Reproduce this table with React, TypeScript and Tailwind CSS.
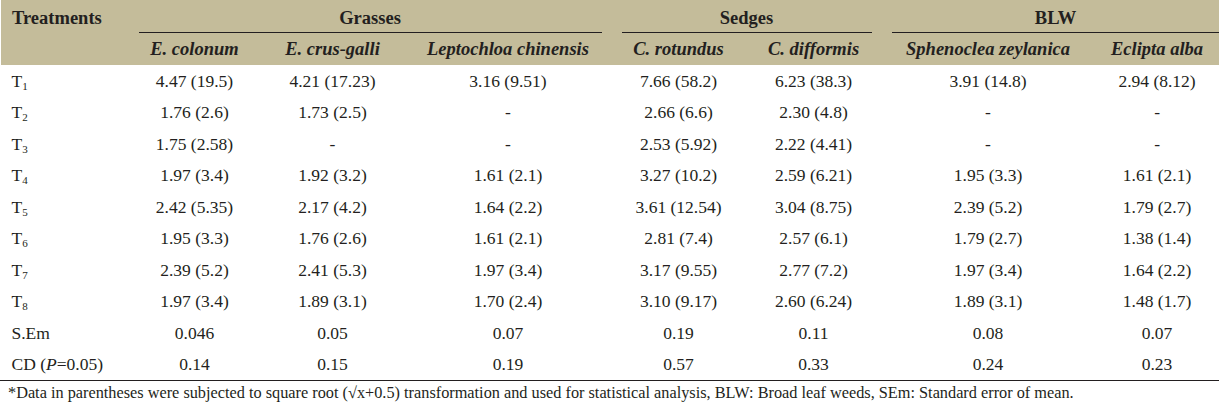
const rows: { t: React.ReactNode; v: string[] }[] = [
  { t: <T n="1" />, v: ['4.47 (19.5)', '4.21 (17.23)', '3.16 (9.51)', '7.66 (58.2)', '6.23 (38.3)', '3.91 (14.8)', '2.94 (8.12)'] },
  { t: <T n="2" />, v: ['1.76 (2.6)', '1.73 (2.5)', '-', '2.66 (6.6)', '2.30 (4.8)', '-', '-'] },
  { t: <T n="3" />, v: ['1.75 (2.58)', '-', '-', '2.53 (5.92)', '2.22 (4.41)', '-', '-'] },
  { t: <T n="4" />, v: ['1.97 (3.4)', '1.92 (3.2)', '1.61 (2.1)', '3.27 (10.2)', '2.59 (6.21)', '1.95 (3.3)', '1.61 (2.1)'] },
  { t: <T n="5" />, v: ['2.42 (5.35)', '2.17 (4.2)', '1.64 (2.2)', '3.61 (12.54)', '3.04 (8.75)', '2.39 (5.2)', '1.79 (2.7)'] },
  { t: <T n="6" />, v: ['1.95 (3.3)', '1.76 (2.6)', '1.61 (2.1)', '2.81 (7.4)', '2.57 (6.1)', '1.79 (2.7)', '1.38 (1.4)'] },
  { t: <T n="7" />, v: ['2.39 (5.2)', '2.41 (5.3)', '1.97 (3.4)', '3.17 (9.55)', '2.77 (7.2)', '1.97 (3.4)', '1.64 (2.2)'] },
  { t: <T n="8" />, v: ['1.97 (3.4)', '1.89 (3.1)', '1.70 (2.4)', '3.10 (9.17)', '2.60 (6.24)', '1.89 (3.1)', '1.48 (1.7)'] },
  { t: 'S.Em', v: ['0.046', '0.05', '0.07', '0.19', '0.11', '0.08', '0.07'] },
  { t: <>CD (<i>P</i>=0.05)</>, v: ['0.14', '0.15', '0.19', '0.57', '0.33', '0.24', '0.23'] },
]

const species = ['E. colonum', 'E. crus-galli', 'Leptochloa chinensis', 'C. rotundus', 'C. difformis', 'Sphenoclea zeylanica', 'Eclipta alba']

function T({ n }: { n: string }) {
  return (
    <span>
      T<sub className="text-[11px] relative top-[3px]">{n}</sub>
    </span>
  )
}

export default function App() {
  return (
    <div className="w-[1219px] h-[404px] bg-white text-[#231f20] font-['Liberation_Serif',serif] overflow-hidden">
      <table className="w-[1219px] table-fixed border-collapse">
        <colgroup>
          <col className="w-[128px]" />
          <col className="w-[132px]" />
          <col className="w-[144px]" />
          <col className="w-[207px]" />
          <col className="w-[134px]" />
          <col className="w-[136px]" />
          <col className="w-[213px]" />
          <col className="w-[125px]" />
        </colgroup>
        <thead className="bg-[#c4bc9a]">
          <tr className="h-[33px]">
            <th className="border-l border-white text-left align-top pl-[11px] pt-[5px] text-[18.5px] font-bold">Treatments</th>
            <th colSpan={3} className="px-[10px] align-top p-0">
              <div className="border-b border-[#231f20] h-[33px] pt-[5px] text-[18.5px] font-bold text-center">Grasses</div>
            </th>
            <th colSpan={2} className="px-[10px] align-top p-0">
              <div className="border-b border-[#231f20] h-[33px] pt-[5px] text-[18.5px] font-bold text-center">Sedges</div>
            </th>
            <th colSpan={2} className="pl-[10px] pr-0 align-top p-0">
              <div className="border-b border-[#231f20] h-[33px] pt-[5px] text-[18.5px] font-bold text-center">BLW</div>
            </th>
          </tr>
          <tr className="h-[32px]">
            <th className="border-l border-white" />
            {species.map((s) => (
              <th key={s} className="text-center text-[18.5px] font-bold italic pt-[1px]">
                {s}
              </th>
            ))}
          </tr>
        </thead>
        <tbody>
          {rows.map((r, i) => (
            <tr key={i} className="h-[31.5px] text-[17.5px]">
              <td className="pl-[11px] text-left">{r.t}</td>
              {r.v.map((v, j) => (
                <td key={j} className="text-center">
                  {v}
                </td>
              ))}
            </tr>
          ))}
        </tbody>
      </table>
      <div className="border-t border-[#231f20] pl-[8px] pt-[2px] text-[16.3px] leading-[20px]">
        *Data in parentheses were subjected to square root (√x+0.5) transformation and used for statistical analysis, BLW: Broad leaf weeds, SEm: Standard error of mean.
      </div>
    </div>
  )
}
